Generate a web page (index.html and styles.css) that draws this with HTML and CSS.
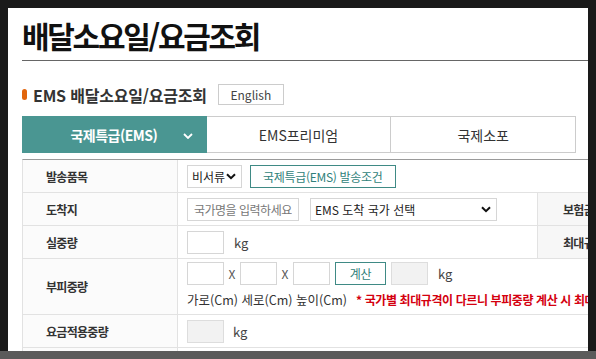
FILE: index.html
```html
<!DOCTYPE html>
<html lang="ko">
<head>
    <meta charset="UTF-8">
    <meta name="viewport" content="width=device-width, initial-scale=1.0">
    <title>배달소요일/요금조회</title>
    <link rel="stylesheet" href="styles.css">
</head>
<body>
    <div class="frame">
        <div class="page">
            <h1 class="page-title">배달소요일/요금조회</h1>

            <div class="sub-head">
                <span class="bullet"></span>
                <h2 class="sub-title">EMS 배달소요일/요금조회</h2>
                <button type="button" class="lang-btn">English</button>
            </div>

            <div class="tabs">
                <div class="tab active">
                    국제특급(EMS)
                    <svg class="tab-arrow" width="10" height="6" viewBox="0 0 10 6"><path d="M1 1l4 4 4-4" fill="none" stroke="#fff" stroke-width="1.8"/></svg>
                </div>
                <div class="tab">EMS프리미엄</div>
                <div class="tab">국제소포</div>
            </div>

            <div class="form-table">
                <div class="row">
                    <div class="label">발송품목</div>
                    <div class="value wide">
                        <span class="select small">비서류
                            <svg width="10" height="7" viewBox="0 0 10 7"><path d="M1 1.2l4 4 4-4" fill="none" stroke="#111" stroke-width="2"/></svg>
                        </span>
                        <button type="button" class="line-btn">국제특급(EMS) 발송조건</button>
                    </div>
                </div>
                <div class="row">
                    <div class="label">도착지</div>
                    <div class="value">
                        <input type="text" class="field country" placeholder="국가명을 입력하세요">
                        <span class="select big">EMS 도착 국가 선택
                            <svg width="10" height="7" viewBox="0 0 10 7"><path d="M1 1.2l4 4 4-4" fill="none" stroke="#111" stroke-width="2"/></svg>
                        </span>
                    </div>
                    <div class="label side">보험금액</div>
                </div>
                <div class="row">
                    <div class="label">실중량</div>
                    <div class="value">
                        <input type="text" class="field num">
                        <span class="unit">kg</span>
                    </div>
                    <div class="label side">최대규격</div>
                </div>
                <div class="row tall">
                    <div class="label">부피중량</div>
                    <div class="value wide stack">
                        <div class="line">
                            <input type="text" class="field num">
                            <span class="times">X</span>
                            <input type="text" class="field num">
                            <span class="times">X</span>
                            <input type="text" class="field num">
                            <button type="button" class="line-btn calc">계산</button>
                            <input type="text" class="field num gray" readonly>
                            <span class="unit">kg</span>
                        </div>
                        <div class="line hint">
                            가로(Cm) 세로(Cm) 높이(Cm)
                            <span class="warn">* 국가별 최대규격이 다르니 부피중량 계산 시 최대규격을 확인하세요.</span>
                        </div>
                    </div>
                </div>
                <div class="row">
                    <div class="label">요금적용중량</div>
                    <div class="value wide">
                        <input type="text" class="field num gray" readonly>
                        <span class="unit near">kg</span>
                    </div>
                </div>
                <div class="row">
                    <div class="label">예상요금</div>
                    <div class="value wide"></div>
                </div>
            </div>
        </div>
        <div class="status-bar"></div>
    </div>
</body>
</html>
```

FILE: styles.css
```css
body {
    margin: 0;
    background: #1a1a1a;
    font-family: "Noto Sans CJK KR", "Noto Sans", sans-serif;
    color: #333;
}

.frame {
    height: 359px;
    padding: 8px 8px 0;
    box-sizing: border-box;
    display: flex;
    flex-direction: column;
}

.page {
    height: 343px;
    background: #fff;
    overflow: hidden;
    padding-left: 14px;
}

.status-bar {
    height: 8px;
    margin: 0 -8px;
    background: #5b5b5b;
}

.page-title {
    margin: 12px 0 0;
    padding-bottom: 9px;
    font-size: 30px;
    line-height: 31px;
    letter-spacing: -2.3px;
    font-weight: bold;
    color: #111;
    border-bottom: 1px solid #666;
}

.sub-head {
    display: flex;
    align-items: center;
    height: 21px;
    margin-top: 23px;
}

.bullet {
    width: 5px;
    height: 11px;
    border-radius: 3px;
    background: #e2650c;
    margin-right: 6px;
}

.sub-title {
    margin: 0;
    font-size: 16px;
    font-weight: bold;
    color: #333;
    letter-spacing: -0.2px;
}

.lang-btn {
    margin-left: 11px;
    width: 66px;
    height: 21px;
    padding: 0;
    border: 1px solid #ccc;
    background: #fff;
    font-family: inherit;
    font-size: 12px;
    color: #444;
}

.tabs {
    display: flex;
    width: 554px;
    height: 37px;
    margin-top: 11px;
}

.tab {
    flex: 1;
    display: flex;
    align-items: center;
    justify-content: center;
    border: 1px solid #ccc;
    border-left: none;
    font-size: 14px;
    color: #333;
}

.tab.active {
    position: relative;
    background: #4a9692;
    border-color: #4a9692;
    color: #fff;
    font-weight: bold;
    letter-spacing: -0.5px;
}

.tab-arrow {
    position: absolute;
    right: 13px;
    top: 16px;
}

.form-table {
    width: 720px;
    margin-top: 6px;
    border-top: 1px solid #9a9a9a;
    border-left: 1px solid #e2e2e2;
}

.row {
    display: grid;
    grid-template-columns: 155px 359px 155px 1fr;
    height: 33px;
    box-sizing: border-box;
    border-bottom: 1px solid #e2e2e2;
}

.row.tall {
    height: 56px;
}

.label {
    display: flex;
    align-items: center;
    padding-left: 23px;
    background: #fbfbfb;
    border-right: 1px solid #e2e2e2;
    font-size: 12px;
    font-weight: bold;
    letter-spacing: -0.7px;
    color: #333;
}

.label.side {
    padding-left: 25px;
    border-left: 1px solid #e2e2e2;
    border-right: none;
    background: #f7f7f7;
}

.value {
    display: flex;
    align-items: center;
    padding-left: 9px;
    font-size: 12px;
}

.value.wide {
    grid-column: 2 / 5;
}

.value.stack {
    flex-direction: column;
    align-items: flex-start;
    justify-content: flex-start;
    padding-top: 3px;
}

.line {
    display: flex;
    align-items: center;
    height: 23px;
}

.line.hint {
    margin-top: 4px;
    height: 20px;
    white-space: nowrap;
    font-size: 12.5px;
    color: #333;
}

.warn {
    margin-left: 9px;
    color: #d4000f;
    font-weight: bold;
    font-size: 12px;
    letter-spacing: -0.4px;
}

.field {
    height: 23px;
    box-sizing: border-box;
    border: 1px solid #d6d6d6;
    padding: 0 6px;
    font-family: inherit;
    font-size: 12px;
    color: #333;
}

.field::placeholder {
    color: #777;
}

.field.country {
    width: 112px;
    letter-spacing: -0.5px;
}

.field.num {
    width: 37px;
}

.field.gray {
    background: #f2f2f2;
    border-color: #ddd;
}

.select {
    display: flex;
    align-items: center;
    justify-content: space-between;
    height: 23px;
    box-sizing: border-box;
    border: 1px solid #d6d6d6;
    padding: 0 5px 0 4px;
    font-size: 12px;
    color: #222;
}

.select.small {
    width: 55px;
}

.select.big {
    width: 187px;
    margin-left: 11px;
}

.line-btn {
    height: 23px;
    margin-left: 8px;
    padding: 0 12px;
    border: 1px solid #3f8a85;
    background: #fff;
    font-family: inherit;
    font-size: 12px;
    color: #2f7f7a;
    letter-spacing: -0.3px;
}

.line-btn.calc {
    width: 51px;
    margin: 0 5px 0 5px;
    padding: 0;
}

.times {
    width: 16px;
    text-align: center;
    font-size: 12px;
    color: #555;
}

.unit {
    margin-left: 10px;
    font-size: 13px;
    color: #444;
}

.unit.near {
    margin-left: 9px;
}
```
